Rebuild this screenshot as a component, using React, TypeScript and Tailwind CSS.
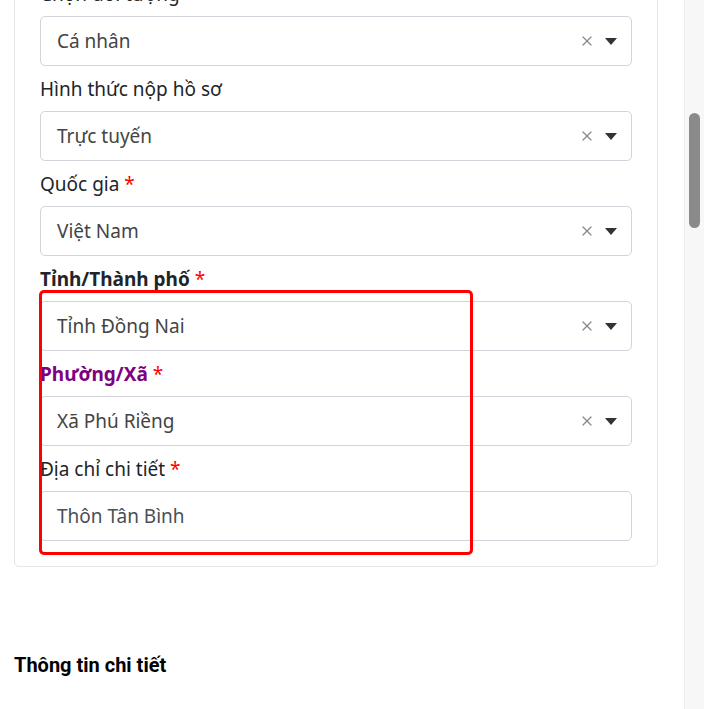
import { X } from "lucide-react";

const font = { fontFamily: '"Noto Sans", "Open Sans", sans-serif' };

function Caret() {
  return (
    <svg width="12" height="7" viewBox="0 0 12 7" className="shrink-0">
      <path d="M0 0h12L6 7z" fill="#333" />
    </svg>
  );
}

function SelectBox({ value }: { value: string }) {
  return (
    <div className="h-[50px] border border-[#d1d5db] rounded-[5px] bg-white flex items-center pl-4 pr-[14px]">
      <span className="flex-1 text-[19px] text-[#444]">{value}</span>
      <X className="w-[16px] h-[16px] text-[#888] mr-[10px]" strokeWidth={1.8} />
      <Caret />
    </div>
  );
}

function Field({
  label,
  required,
  className,
  children,
}: {
  label: string;
  required?: boolean;
  className?: string;
  children: React.ReactNode;
}) {
  return (
    <div className="flex flex-col">
      <label className={`text-[19px] leading-6 mb-[10px] ${className ?? "text-[#212529]"}`}>
        {label}
        {required && <span className="text-[#ff0000] font-normal"> *</span>}
      </label>
      {children}
    </div>
  );
}

export default function App() {
  return (
    <div className="h-[709px] overflow-hidden flex bg-white" style={font}>
      <div className="flex-1 pl-[14px] pr-[26px]">
        <div className="mt-[-43px] border border-[#e3e5e8] rounded-[5px] px-[25px] pt-[24px] pb-[25px] flex flex-col gap-[11px]">
          <Field label="Chọn đối tượng">
            <SelectBox value="Cá nhân" />
          </Field>
          <Field label="Hình thức nộp hồ sơ">
            <SelectBox value="Trực tuyến" />
          </Field>
          <Field label="Quốc gia" required>
            <SelectBox value="Việt Nam" />
          </Field>
          <div className="relative flex flex-col gap-[11px]">
            <Field label="Tỉnh/Thành phố" required className="font-bold text-[#212529]">
              <SelectBox value="Tỉnh Đồng Nai" />
            </Field>
            <Field label="Phường/Xã" required className="font-bold text-[#800080]">
              <SelectBox value="Xã Phú Riềng" />
            </Field>
            <Field label="Địa chỉ chi tiết" required>
              <div className="h-[50px] border border-[#d1d5db] rounded-[5px] bg-white flex items-center pl-4 text-[19px] text-[#495057]">
                Thôn Tân Bình
              </div>
            </Field>
            <div className="absolute left-[-1px] top-[23px] w-[434px] h-[265px] border-[3px] border-[#ff0000] rounded-[5px] pointer-events-none" />
          </div>
        </div>
        <h2
          className="mt-[86px] text-[20px] font-bold text-black leading-6"
          style={{ fontFamily: "Roboto, sans-serif" }}
        >
          Thông tin chi tiết
        </h2>
      </div>
      <div className="w-[20px] bg-[#f7f7f7] border-l border-[#ececec] pt-[113px] pl-[4px]">
        <div className="w-[11px] h-[115px] rounded-full bg-[#8a8a8a]" />
      </div>
    </div>
  );
}
